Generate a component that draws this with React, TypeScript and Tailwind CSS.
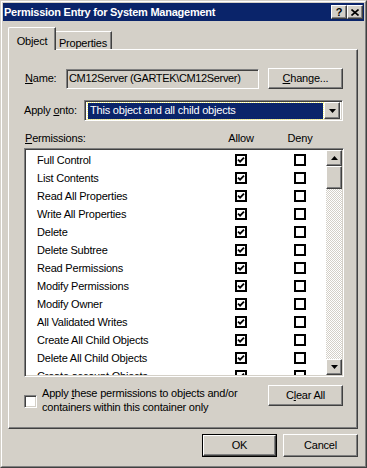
import React from 'react';

const permissions = [
  'Full Control',
  'List Contents',
  'Read All Properties',
  'Write All Properties',
  'Delete',
  'Delete Subtree',
  'Read Permissions',
  'Modify Permissions',
  'Modify Owner',
  'All Validated Writes',
  'Create All Child Objects',
  'Delete All Child Objects',
  'Create account Objects',
];

// raised 3D edge, classic style
const raised =
  'bg-[#d4d0c8] border border-t-white border-l-white border-b-[#404040] border-r-[#404040] shadow-[inset_-1px_-1px_0_#808080]';
const sunken =
  'border border-t-[#808080] border-l-[#808080] border-b-white border-r-white shadow-[inset_1px_1px_0_#404040,inset_-1px_-1px_0_#d4d0c8]';

function Check({ checked }: { checked: boolean }) {
  return (
    <div className="w-[12px] h-[12px] border-2 border-black bg-white flex items-center justify-center">
      {checked && (
        <svg width="8" height="8" viewBox="0 0 8 8">
          <path d="M1 3.6 L3.1 5.7 L7 1.6" stroke="#000" strokeWidth="1.8" fill="none" />
        </svg>
      )}
    </div>
  );
}

function Arrow({ down }: { down?: boolean }) {
  return (
    <svg width="7" height="4" viewBox="0 0 7 4">
      <path d={down ? 'M0 0 H7 L3.5 4 Z' : 'M0 4 H7 L3.5 0 Z'} fill="#000" />
    </svg>
  );
}

function Btn({ children, className = '' }: { children: React.ReactNode; className?: string }) {
  return (
    <div className={`${raised} flex items-center justify-center ${className}`}>{children}</div>
  );
}

export default function App() {
  return (
    <div className="w-[367px] h-[468px] bg-[#d4d0c8] border border-t-[#d4d0c8] border-l-[#d4d0c8] border-b-[#404040] border-r-[#404040] font-['Liberation_Sans',Arial,sans-serif] text-[11px] tracking-[-0.2px] text-black overflow-hidden">
      <div className="w-full h-full border border-t-white border-l-white border-b-[#808080] border-r-[#808080] p-[1px]">
        {/* title bar */}
        <div className="h-[18px] bg-[#0a246a] flex items-center justify-between pl-[1px] pr-[1px]">
          <span className="text-white font-bold text-[11px] tracking-[-0.25px] leading-none">
            Permission Entry for System Management
          </span>
          <div className="flex">
            <div className={`${raised} w-[16px] h-[14px] flex items-center justify-center font-bold text-[11px] leading-none`}>
              ?
            </div>
            <div className={`${raised} w-[16px] h-[14px] flex items-center justify-center`}>
              <svg width="8" height="7" viewBox="0 0 8 7">
                <path d="M0.5 0.5 L7.5 6.5 M7.5 0.5 L0.5 6.5" stroke="#000" strokeWidth="1.6" />
              </svg>
            </div>
          </div>
        </div>

        <div className="pt-[6px] pl-[5px]">
          {/* tabs */}
          <div className="flex items-end h-[23px]">
            <div className="relative z-10 h-[23px] w-[48px] bg-[#d4d0c8] border-l border-t border-l-white border-t-white border-r border-r-[#404040] shadow-[inset_-1px_0_0_#808080] rounded-tl-[2px] flex items-start justify-center pt-[5px]">
              Object
            </div>
            <div className="relative h-[18px] w-[57px] mb-[1px] -ml-[1px] border-t border-t-white border-r border-r-[#404040] shadow-[inset_-1px_0_0_#808080] flex items-start justify-center pt-[3px]">
              Properties
            </div>
          </div>

          {/* panel */}
          <div className="-mt-[1px] w-[350px] h-[380px] border border-t-white border-l-white border-b-[#404040] border-r-[#404040] shadow-[inset_-1px_-1px_0_#808080] pl-[15px] pt-[18px]">
            <div className="w-[320px]">
              <div className="flex items-center h-[21px]">
                <span className="w-[42px] pl-[1px]">
                  <u>N</u>ame:
                </span>
                <div className={`${sunken} w-[193px] h-[20px] bg-[#d4d0c8] flex items-center pl-[2px] whitespace-nowrap tracking-[-0.35px]`}>
                  CM12Server (GARTEK\CM12Server)
                </div>
                <Btn className="ml-auto mr-[1px] w-[75px] h-[21px]">
                  <span>
                    <u>C</u>hange...
                  </span>
                </Btn>
              </div>

              <div className="flex items-center h-[21px] mt-[11px]">
                <span className="w-[60px]">
                  Apply <u>o</u>nto:
                </span>
                <div className={`${sunken} w-[259px] h-[21px] bg-white flex items-center p-[3px] pr-[2px]`}>
                  <div className="flex-1 h-[16px] bg-[#0a246a] outline-1 outline-dotted outline-[#ffff80] text-white flex items-center pl-[2px] whitespace-nowrap">
                    This object and all child objects
                  </div>
                  <Btn className="w-[16px] h-[17px] ml-[1px]">
                    <Arrow down />
                  </Btn>
                </div>
              </div>

              <div className="flex items-center h-[16px] mt-[9px]">
                <span className="w-[191px] pl-[1px]">
                  <u>P</u>ermissions:
                </span>
                <span className="w-[52px] text-center">Allow</span>
                <span className="w-[8px]" />
                <span className="w-[50px] text-center">Deny</span>
              </div>

              {/* list */}
              <div className={`${sunken} mt-[2px] h-[229px] w-[320px] bg-white flex p-[1px] overflow-hidden`}>
                <div className="flex-1 pt-[1px] overflow-hidden">
                  {permissions.map((p, i) => (
                    <div key={i} className="flex items-center h-[18px]">
                      <span className="w-[189px] pl-[11px] whitespace-nowrap">{p}</span>
                      <div className="w-[52px] flex justify-center">
                        <Check checked />
                      </div>
                      <span className="w-[8px]" />
                      <div className="w-[50px] flex justify-center">
                        <Check checked={false} />
                      </div>
                    </div>
                  ))}
                </div>
                <div className="w-[16px] flex flex-col">
                  <Btn className="h-[16px]">
                    <Arrow />
                  </Btn>
                  <div className={`${raised} h-[23px]`} />
                  <div className="flex-1 bg-[repeating-conic-gradient(#d4d0c8_0_25%,#ffffff_0_50%)] bg-[length:2px_2px]" />
                  <Btn className="h-[16px]">
                    <Arrow down />
                  </Btn>
                </div>
              </div>

              <div className="flex mt-[8px]">
                <div className={`${sunken} w-[13px] h-[13px] bg-white mt-[10px]`} />
                <div className="ml-[5px] leading-[14px] pt-[1px]">
                  <div>
                    Apply <u>t</u>hese permissions to objects and/or
                  </div>
                  <div>containers within this container only</div>
                </div>
                <Btn className="ml-auto mr-[1px] w-[75px] h-[21px]">
                  <span>
                    C<u>l</u>ear All
                  </span>
                </Btn>
              </div>
            </div>
          </div>

          {/* dialog buttons */}
          <div className="w-[350px] flex justify-end gap-[6px] mt-[5px]">
            <div className="border border-black">
              <Btn className="w-[73px] h-[21px]">OK</Btn>
            </div>
            <Btn className="w-[75px] h-[23px]">Cancel</Btn>
          </div>
        </div>
      </div>
    </div>
  );
}
